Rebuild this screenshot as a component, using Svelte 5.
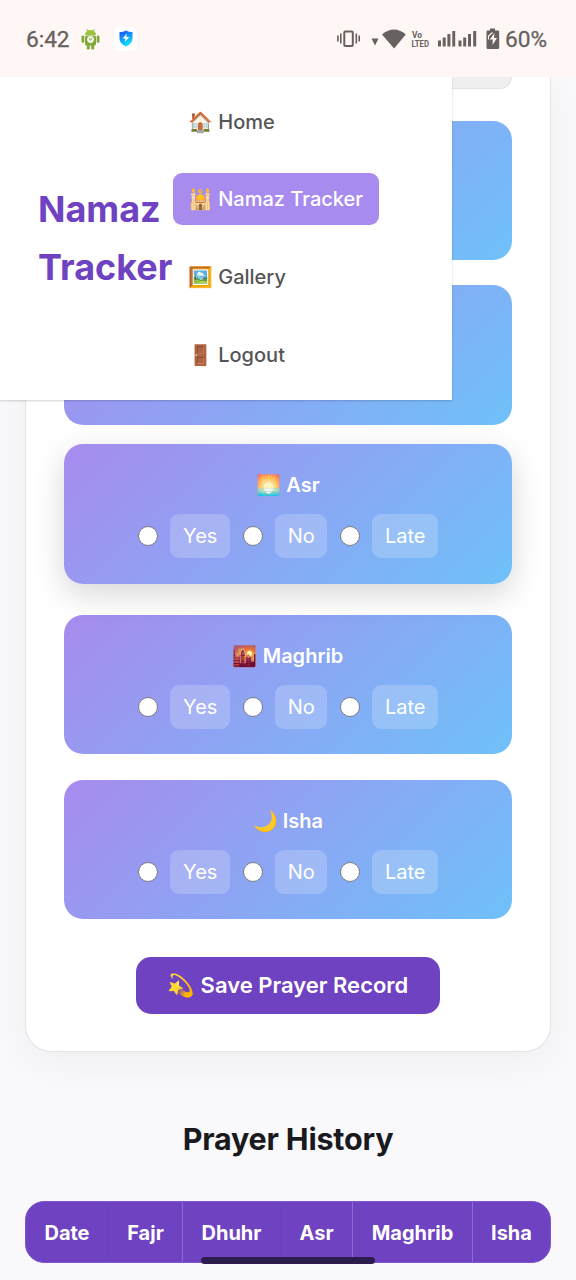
<script>
  const prayers = [
    { icon: '', name: '' },
    { icon: '', name: '' },
    { icon: '🌅', name: 'Asr', raised: true },
    { icon: '🌇', name: 'Maghrib' },
    { icon: '🌙', name: 'Isha' }
  ];
  const options = [['Yes', 60], ['No', 52], ['Late', 66]];
  const columns = [['Date', 83], ['Fajr', 74], ['Dhuhr', 98], ['Asr', 72], ['Maghrib', 120], ['Isha', 77]];
  const links = [['🏠', 'Home'], ['🕌', 'Namaz Tracker'], ['🖼️', 'Gallery'], ['🚪', 'Logout']];
</script>

<div class="screen">
  <header class="status">
    <span class="time">6:42</span>
    <svg class="droid" width="19" height="22" viewBox="0 0 19 22">
      <g fill="#83a83a">
        <path d="M4 7a5.500 5 0 0 1 11 0z" fill="#9bc33c" />
        <path d="M5.500 1l1.200 2M13.500 1l-1.200 2" stroke="#9bc33c" />
        <rect x="4" y="7.500" width="11" height="10" rx="1.500" />
        <rect x="0.500" y="7.500" width="2.800" height="7.500" rx="1.400" />
        <rect x="15.700" y="7.500" width="2.800" height="7.500" rx="1.400" />
        <rect x="5.800" y="16" width="3" height="5.500" rx="1.200" />
        <rect x="10.200" y="16" width="3" height="5.500" rx="1.200" />
      </g>
      <circle cx="9.500" cy="11.500" r="3.400" fill="#f0f5e4" />
      <path d="M8 10.500l1.500 1.300 1.500-1.300" fill="none" stroke="#728550" />
    </svg>
    <span class="appicon">
      <svg width="14" height="17" viewBox="0 0 14 17">
        <defs><linearGradient id="sh" x1="0" y1="0" x2="0.400" y2="1"><stop offset="0.200" stop-color="#1765fa" /><stop offset="1" stop-color="#10e2f6" /></linearGradient></defs>
        <path d="M7 .5C9 1.800 11 2 13.500 2v6c0 4-2.500 6.500-6.500 8.500C3 14.500.5 12 .5 8V2C3 2 5 1.800 7 .5z" fill="url(#sh)" />
        <path d="M7.800 3.500L3.600 8.500h2.900l-.6 3.500 4.400-5H7.300z" fill="#fff" />
      </svg>
    </span>
    <svg class="sys" width="166" height="30" viewBox="0 0 166 30" fill="#67625f">
      <g>
        <rect x="7.300" y="6.500" width="8.500" height="14.500" rx="1" fill="none" stroke="#67625f" stroke-width="2" />
        <path d="M.9 10.500v6M3.800 8.500v10M19.300 8.500v10M22.200 10.500v6" stroke="#67625f" stroke-width="1.600" />
      </g>
      <path d="M34.500 13.500h7l-3.500 7z" />
      <path d="M45 9.500Q57-.5 68.800 9.500L57.100 23.500z" />
      <text x="75" y="13" class="volte" textLength="10" lengthAdjust="spacingAndGlyphs">Vo</text>
      <text x="74.500" y="21.500" class="volte" textLength="17.500" lengthAdjust="spacingAndGlyphs">LTED</text>
      <path d="M101 15.500h3v6h-3zM105.700 12.500h3v9h-3zM110.400 9h3v12.500h-3zM115.300 6h2.900v15.500h-2.900zM121.500 15.500h3v6h-3zM126.200 12.500h3v9h-3zM131 9h3v12.500h-3zM136.200 6h3v15.500h-3z" />
      <path d="M150.500 5.500h2.500V3.500h5V5.500h3q1.200 0 1.200 1.200v16.100q0 1.200-1.200 1.200h-10.300q-1.200 0-1.200-1.200V6.700q0-1.200 1-1.200z" />
      <path d="M157.500 8l-.5 5h3l-4.500 7 .3-5.500h-3z" fill="#fff7f5" />
      <path d="M151.500 14.500v-3.500l4-3.500" stroke="#fff7f5" fill="none" stroke-width="1.100" />
    </svg>
    <span class="pct">60%</span>
  </header>

  <main>
    <section class="panel">
      <div class="field"></div>
      <div class="list">
        {#each prayers as p}
          <article class="prayer" class:raised={p.raised}>
            {#if p.name}
              <h3>{p.icon} {p.name}</h3>
              <div class="options">
                {#each options as [label, w]}
                  <span class="radio"></span>
                  <span class="pill" style="width:{w}px">{label}</span>
                {/each}
              </div>
            {/if}
          </article>
        {/each}
      </div>
      <button>💫 Save Prayer Record</button>
    </section>
    <h2>Prayer History</h2>
    <div class="table">
      {#each columns as [name, w], i}
        <div class="th" class:faint={i === 0 || i === 2} style="width:{w}px">{name}</div>
      {/each}
    </div>
  </main>

  <nav>
    <div class="brand">Namaz<br />Tracker</div>
    <div class="links">
      {#each links as [icon, label], i}
        <span class="link" class:active={i === 1}>{icon} {label}</span>
      {/each}
    </div>
  </nav>
  <div class="home-bar"></div>
</div>

<style>
  :global(body) { margin: 0; background: #f9f9fc; }
  .screen { position: relative; width: 576px; height: 1280px; overflow: hidden; background: #f9f9fc; font-family: Inter, "Noto Color Emoji", sans-serif; display: flex; flex-direction: column; }
  .screen * { box-sizing: border-box; }
  .status { height: 77px; flex: none; background: #fff7f5; display: flex; align-items: center; padding: 2px 29px 0 26px; position: relative; z-index: 2; font-family: Roboto, sans-serif; color: #67625f; }
  .time, .pct { font-size: 22.700px; line-height: 30px; letter-spacing: -.05px; -webkit-text-stroke: .3px #67625f; }
  .time { width: 55px; }
  .droid { margin-right: 14px; margin-top: -2px; }
  .appicon { width: 23px; height: 24px; margin-top: -2px; border-radius: 5px; background: #fff; display: grid; place-items: center; }
  .sys { margin-left: auto; margin-right: 2px; margin-top: 1px; }
  .volte { font: 700 9px Roboto, sans-serif; }
  main { height: 1203px; padding: 0 25px; display: flex; flex-direction: column; align-items: center; }
  .panel { width: 526px; height: 975px; flex: none; border: 1px solid #e3e3e5; border-top: 0; border-radius: 0 0 26px 26px; background: #fff; padding: 0 38px; display: flex; flex-direction: column; align-items: center; box-shadow: 0 10px 38px rgba(0,0,0,.045); }
  .field { width: 448px; height: 12px; flex: none; background: #efefef; border: 1px solid #e3e3e3; border-top: 0; border-radius: 0 0 13px 13px; }
  .list { margin-top: 31.600px; display: flex; flex-direction: column; gap: 25.300px; }
  .prayer { width: 448px; height: 139.500px; border-radius: 19px; background: linear-gradient(135deg, #a78bee, #6fc1f9); color: #fff; }
  .raised { transform: translateY(-6px); box-shadow: 0 10px 32px rgba(0,0,0,.16); }
  h3 { margin: 0; padding-top: 26px; height: 70px; font-size: 20px; line-height: 31px; font-weight: 600; text-align: center; }
  .options { display: flex; justify-content: center; align-items: center; gap: 12.500px; }
  .radio { width: 20px; height: 20px; border: 1.500px solid #7b7b82; border-radius: 50%; background: #fff; }
  .pill { height: 44px; border-radius: 9px; background: rgba(255,255,255,.2); font-size: 20px; line-height: 44px; text-align: center; }
  button { margin-top: 37.700px; width: 304px; height: 57px; flex: none; border: 0; border-radius: 15px; background: #6f42c1; color: #fff; font: 600 22px Inter, "Noto Color Emoji", sans-serif; padding: 0; white-space: nowrap; }
  h2 { margin: 67px 0 0; height: 82px; font-size: 30.500px; line-height: 40px; font-weight: 700; letter-spacing: -.2px; color: #1a1a1e; }
  .table { width: 526px; height: 62px; flex: none; display: flex; background: #6f42c1; border: 1px solid #7f56c9; border-radius: 19px; overflow: hidden; }
  .th { flex: none; border-right: 1px solid #8d69ce; color: #fff; font-size: 20px; font-weight: 700; line-height: 62px; text-align: center; }
  .th.faint { border-color: #6b40bd; }
  .th:last-child { border: 0; }
  nav { position: absolute; left: 0; top: 77px; width: 452px; height: 323px; background: #fff; display: flex; box-shadow: 0 1px 2px rgba(0,0,0,.18); }
  .brand { width: 173px; padding: 103px 0 0 38px; color: #6f42c1; font-size: 36px; line-height: 58px; font-weight: 700; }
  .links { display: flex; flex-direction: column; align-items: flex-start; gap: 25.700px; padding-top: 18.500px; }
  .link { height: 52px; line-height: 52px; padding: 0 16px 0 15px; font-size: 20px; font-weight: 500; color: #555; border-radius: 9px; white-space: nowrap; }
  .active { background: #a78bef; color: #fff; }
  .home-bar { position: absolute; left: 201px; top: 1257px; width: 174px; height: 7px; border-radius: 4px; background: #2d1b4e; }
</style>
